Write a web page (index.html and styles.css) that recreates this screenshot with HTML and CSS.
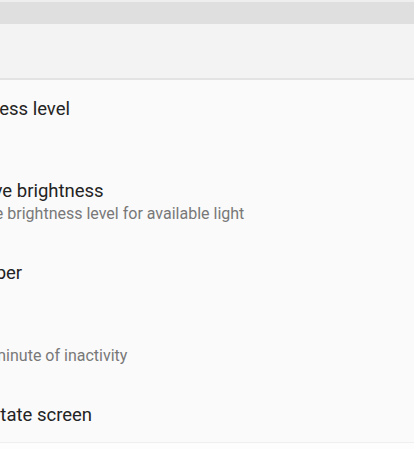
FILE: index.html
```html
<!DOCTYPE html>
<html>
<head>
<meta charset="utf-8">
<link rel="stylesheet" href="styles.css">
</head>
<body>
<div class="screen">
  <div class="statusbar"></div>
  <div class="toolbar"></div>
  <div class="list">
    <div class="item first"><div class="title">Brightness level</div></div>
    <div class="item"><div class="title">Adaptive brightness</div><div class="summary">Optimize brightness level for available light</div></div>
    <div class="item"><div class="title">Wallpaper</div></div>
    <div class="item"><div class="title">Sleep</div><div class="summary">After 1 minute of inactivity</div></div>
    <div class="item"><div class="title">Auto-rotate screen</div></div>
  </div>
  <div class="navedge"></div>
</div>
</body>
</html>
```
FILE: styles.css
```css
html, body {
  margin: 0;
  padding: 0;
  background: #fafafa;
}
.screen {
  width: 414px;
  height: 449px;
  overflow: hidden;
  display: flex;
  flex-direction: column;
  font-family: Roboto, "Noto Sans", sans-serif;
}
.statusbar {
  height: 22px;
  flex-shrink: 0;
  background: #dfdfdf;
  border-top: 2px solid #eeeeee;
}
.toolbar {
  height: 54px;
  flex-shrink: 0;
  background: #f3f3f3;
  border-bottom: 2px solid #e3e3e3;
}
.list {
  flex: 1;
  min-height: 0;
  overflow: hidden;
  background: #fafafa;
  margin-left: -60px;
  display: flex;
  flex-direction: column;
}
.item {
  height: 71px;
  display: flex;
  flex-direction: column;
  justify-content: center;
  flex-shrink: 0;
}
.item.first {
  height: 86px;
  justify-content: flex-start;
  padding-top: 18px;
  box-sizing: border-box;
}
.title {
  font-size: 18.5px;
  line-height: 22px;
  color: #232323;
  white-space: nowrap;
}
.summary {
  font-size: 16px;
  line-height: 20px;
  margin-top: 2px;
  color: #787878;
  white-space: nowrap;
}
.navedge {
  height: 6px;
  flex-shrink: 0;
  background: #fdfdfd;
  border-top: 1px solid #efefef;
}
```
